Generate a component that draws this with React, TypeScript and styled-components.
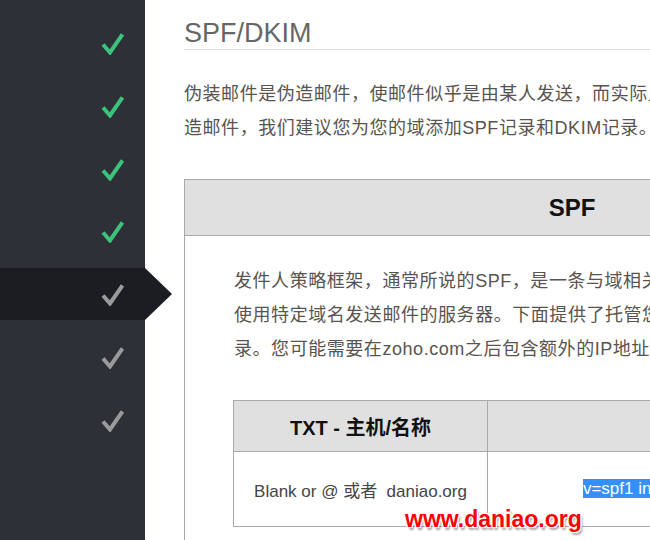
import styled, { createGlobalStyle } from "styled-components";

const GlobalStyle = createGlobalStyle`
  html, body {
    margin: 0;
    padding: 0;
    background: #ffffff;
  }
  body {
    font-family: "Liberation Sans", "Noto Sans CJK SC", sans-serif;
    overflow: hidden;
  }
`;

const Page = styled.div`
  position: relative;
  display: flex;
  width: 650px;
  height: 540px;
  overflow: hidden;
`;

const Sidebar = styled.nav`
  flex: 0 0 145px;
  background: #2e3038;
  padding-top: 17px;
  box-sizing: border-box;
  position: relative;
  z-index: 2;
`;

const StepList = styled.ul`
  list-style: none;
  margin: 0;
  padding: 0;
  display: flex;
  flex-direction: column;
  gap: 10.8px;
`;

const Step = styled.li<{ $active?: boolean }>`
  position: relative;
  height: 52px;
  display: flex;
  align-items: center;
  justify-content: flex-end;
  padding-right: 21px;
  background: ${(p) => (p.$active ? "#1c1d22" : "transparent")};

  &::after {
    content: "";
    display: ${(p) => (p.$active ? "block" : "none")};
    position: absolute;
    left: 100%;
    top: 0;
    width: 0;
    height: 0;
    border-top: 26px solid transparent;
    border-bottom: 26px solid transparent;
    border-left: 27px solid #1c1d22;
  }
`;

const Main = styled.main`
  flex: 0 0 auto;
  width: 776px;
  padding-left: 39px;
  padding-top: 18px;
`;

const Title = styled.h1`
  margin: 0;
  font-size: 27px;
  line-height: 31px;
  font-weight: 400;
  color: #666666;
  border-bottom: 1px solid #dddddd;
`;

const Text = styled.p`
  margin: 27px 0 34px;
  font-size: 18px;
  line-height: 34px;
  letter-spacing: 0.55px;
  color: #585450;
  white-space: nowrap;
`;

const Box = styled.section`
  border: 1px solid #aaaaaa;
`;

const BoxHeader = styled.div`
  height: 55px;
  display: flex;
  align-items: center;
  justify-content: center;
  background: #e0e0e0;
  border-bottom: 1px solid #aaaaaa;
  font-size: 24px;
  font-weight: 700;
  color: #111111;
`;

const BoxBody = styled.div`
  padding: 0 49px 48px;

  ${Text} {
    margin: 28px 0 34px;
  }
`;

const RecordTable = styled.table`
  width: 665px;
  margin-left: -1px;
  border-collapse: collapse;
  table-layout: fixed;
`;

const HeadCell = styled.th<{ $width?: number }>`
  width: ${(p) => (p.$width ? `${p.$width}px` : "auto")};
  height: 50px;
  padding: 0;
  background: #e0e0e0;
  border: 1px solid #aaaaaa;
  font-size: 20px;
  font-weight: 700;
  color: #111111;
  text-align: center;
`;

const Cell = styled.td`
  height: 74px;
  padding: 0;
  border: 1px solid #aaaaaa;
  font-size: 17px;
  color: #444444;
  text-align: center;
  vertical-align: middle;
  white-space: nowrap;
`;

const Selected = styled.span`
  background: #3390ff;
  color: #ffffff;
`;

const Watermark = styled.div`
  position: absolute;
  left: 405px;
  top: 507px;
  z-index: 5;
  font-family: "Liberation Sans", Arial, sans-serif;
  font-size: 23px;
  font-weight: 700;
  line-height: 25px;
  color: #ff0000;
  text-shadow:
    1px 0 0 #fff, -1px 0 0 #fff, 0 1px 0 #fff, 0 -1px 0 #fff,
    1px 1px 0 #fff, -1px -1px 0 #fff, 1px -1px 0 #fff, -1px 1px 0 #fff,
    2px 3px 2px rgba(0, 0, 0, 0.35);
`;

const Check = ({ done }: { done: boolean }) => (
  <svg width="24" height="24" viewBox="0 0 24 24">
    <path
      d="M3 13.5 L10 21.5 L22.5 3.5"
      fill="none"
      stroke={done ? "#3cc27a" : "#9a9a9a"}
      strokeWidth="4"
      strokeLinejoin="miter"
    />
  </svg>
);

const steps = [true, true, true, true, false, false, false];

export default function App() {
  return (
    <>
      <GlobalStyle />
      <Page>
        <Sidebar>
          <StepList>
            {steps.map((done, i) => (
              <Step key={i} $active={i === 4}>
                <Check done={done} />
              </Step>
            ))}
          </StepList>
        </Sidebar>

        <Main>
          <Title>SPF/DKIM</Title>
          <Text>
            伪装邮件是伪造邮件，使邮件似乎是由某人发送，而实际上是由其他人发送的。为防止他人利用您的域发送伪
            <br />
            造邮件，我们建议您为您的域添加SPF记录和DKIM记录。
          </Text>

          <Box>
            <BoxHeader>SPF</BoxHeader>
            <BoxBody>
              <Text>
                发件人策略框架，通常所说的SPF，是一条与域相关联的DNS TXT记录，列出了获授权
                <br />
                使用特定域名发送邮件的服务器。下面提供了托管您的域的Zoho邮件的SPF记
                <br />
                录。您可能需要在zoho.com之后包含额外的IP地址。
              </Text>

              <RecordTable>
                <thead>
                  <tr>
                    <HeadCell $width={253}>TXT - 主机/名称</HeadCell>
                    <HeadCell>TXT - 值</HeadCell>
                  </tr>
                </thead>
                <tbody>
                  <tr>
                    <Cell>Blank or @ 或者&nbsp;&nbsp;daniao.org</Cell>
                    <Cell>
                      <Selected>v=spf1 include:zoho.com ~all</Selected>
                    </Cell>
                  </tr>
                </tbody>
              </RecordTable>
            </BoxBody>
          </Box>
        </Main>

        <Watermark>www.daniao.org</Watermark>
      </Page>
    </>
  );
}
